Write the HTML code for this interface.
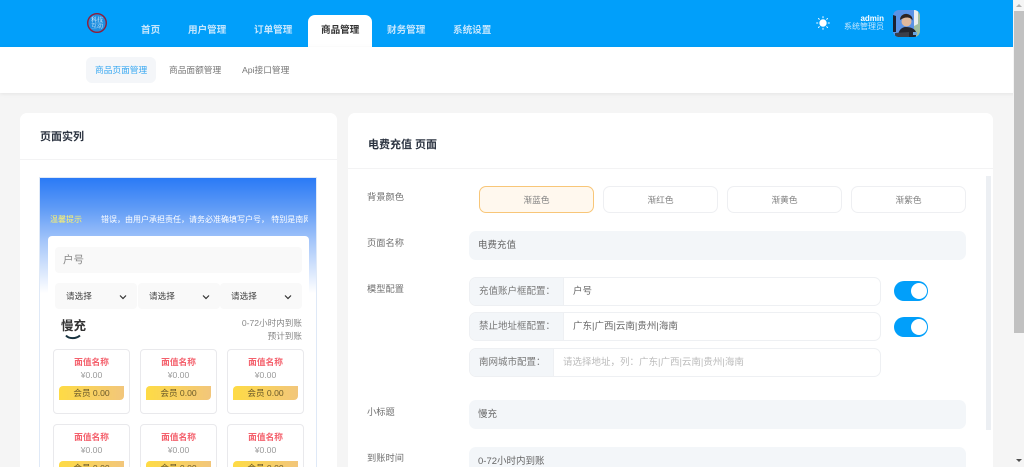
<!DOCTYPE html>
<html lang="zh"><head><meta charset="utf-8"><title>商品页面管理</title>
<style>
html,body{margin:0;padding:0;width:1024px;height:467px;overflow:hidden;background:#f5f5f5;font-family:"Liberation Sans","Noto Sans CJK SC",sans-serif}
#w{position:relative;width:1024px;height:467px;overflow:hidden;background:#f5f5f5;filter:blur(.3px)}
.a{position:absolute;box-sizing:border-box}
.t{position:absolute;white-space:nowrap;line-height:1}
.nav{color:#c5e6fd;font-size:9.6px;font-weight:700;top:25.5px}
.lab{color:#6f6f6f;font-size:9.25px;left:367px}
.btn{position:absolute;top:186px;width:115px;height:27px;border:1px solid #eeeff2;border-radius:7px;background:#fff;color:#808080;font-size:8.7px;line-height:26px;text-align:center;box-sizing:border-box}
.inp{position:absolute;left:469px;width:497px;height:29px;background:#f3f6f9;border-radius:7px;color:#666;font-size:9.5px;line-height:29px;padding-left:9px;box-sizing:border-box}
.grp{position:absolute;left:469px;width:412px;height:29px;border:1px solid #eef0f3;border-radius:7px;box-sizing:border-box;background:#fff;overflow:hidden;font-size:9.5px;line-height:28.5px;color:#666}
.grp span{display:block;position:absolute;left:0;top:0;height:27px;background:#f3f6f9;border-right:1px solid #eef0f3;box-sizing:border-box;padding-left:9px;color:#777}
.grp i{font-style:normal;position:absolute;top:0}
.tog{position:absolute;left:894px;width:34px;height:20px;background:#019ffa;border-radius:10px}
.tog:after{content:"";position:absolute;right:1.5px;top:2px;width:16px;height:16px;background:#fff;border-radius:50%}
.sel{position:absolute;top:283px;height:26px;background:#f9f9f9;border-radius:4px;color:#444;font-size:8.6px;line-height:27px;padding-left:11px;box-sizing:border-box}
.sel svg{position:absolute;right:10px;top:11px}
.card{position:absolute;width:77px;height:65px;border:1px solid #e9e9ec;border-radius:4px;background:#fff;text-align:center;box-sizing:border-box;overflow:hidden}
.card b{display:block;position:absolute;left:0;right:0;top:6px;color:#f4606c;font-size:8.7px;line-height:12px;font-weight:700}
.card em{display:block;position:absolute;left:0;right:0;top:18.500px;font-style:normal;color:#999;font-size:8.6px;line-height:12px}
.card u{display:block;position:absolute;left:5px;top:36px;width:65px;height:14px;text-decoration:none;background:linear-gradient(90deg,#fedb45,#f2c67b);border-radius:4px 0 4px 0;color:#6b5a2a;font-size:8.6px;line-height:14px}
</style></head><body><div id="w">

<!-- header -->
<div class="a" style="left:0;top:0;width:1024px;height:47px;background:#019ffa"></div>
<svg class="a" style="left:86px;top:12px" width="22" height="22" viewBox="0 0 22 22"><circle cx="11" cy="11" r="9.3" fill="#1f8fe0" stroke="#8e1e3a" stroke-width="1.4"/><text x="11" y="9.8" font-size="6" fill="#e6f4fd" text-anchor="middle" font-family="Noto Serif CJK SC,serif">科技</text><text x="11" y="16" font-size="6" fill="#e6f4fd" text-anchor="middle" font-family="Noto Serif CJK SC,serif">互动</text></svg>
<div class="t nav" style="left:141px">首页</div>
<div class="t nav" style="left:188px">用户管理</div>
<div class="t nav" style="left:254px">订单管理</div>
<div class="a" style="left:308px;top:15px;width:64px;height:32px;background:#fff;border-radius:7px 7px 0 0"></div>
<div class="t nav" style="left:321px;color:#333">商品管理</div>
<div class="t nav" style="left:387px">财务管理</div>
<div class="t nav" style="left:453px">系统设置</div>
<svg class="a" style="left:816px;top:16px" width="14" height="14" viewBox="0 0 14 14"><circle cx="7" cy="7" r="3.7" fill="#fff"/><g stroke="#fff" stroke-width="1" stroke-linecap="round"><path d="M7 .6v1.2M7 12.2v1.2M.6 7h1.2M12.2 7h1.2M2.5 2.5l.8.8M10.7 10.7l.8.8M2.5 11.5l.8-.8M10.7 3.3l.8-.8"/></g></svg>
<div class="t" style="right:140px;top:15px;font-size:8px;font-weight:700;color:#fff">admin</div>
<div class="t" style="right:140px;top:23px;font-size:8px;color:#c5e6fd">系统管理员</div>
<svg class="a" style="left:893px;top:10px" width="27" height="27" viewBox="0 0 27 27"><defs><clipPath id="c"><rect width="27" height="27" rx="6"/></clipPath></defs><g clip-path="url(#c)"><rect width="27" height="27" fill="#5a93e6"/><rect x="21" width="6" height="27" fill="#9fbf9f"/><path d="M21 0h4v14l-4 2z" fill="#e9eef0"/><path d="M0 5l3 1v16H0z" fill="#1c2230"/><path d="M5 27c0-6 3-10 8-10s9 2 10 5v5z" fill="#23252e"/><path d="M2 23l14-1v5H2z" fill="#3b3f4a"/><circle cx="13.500" cy="11.500" r="5" fill="#e0b89c"/><path d="M7 10c0-4 3.500-6.500 7-6s6 3 5.500 6.500c-1-2-3-3-5.500-3s-5 1-7 2.500z" fill="#2d2220"/><rect x="20" y="22" width="4" height="3" fill="#6aa5e0"/></g></svg>

<!-- sub nav -->
<div class="a" style="left:0;top:47px;width:1024px;height:46px;background:#fff;box-shadow:0 1px 4px rgba(0,0,0,.07)"></div>
<div class="a" style="left:86px;top:57px;width:70px;height:26px;background:#f4f6f9;border-radius:6px"></div>
<div class="t" style="left:95px;top:66px;font-size:8.7px;color:#3aa9f2">商品页面管理</div>
<div class="t" style="left:169px;top:66px;font-size:8.7px;color:#777">商品面额管理</div>
<div class="t" style="left:242px;top:66px;font-size:8.7px;color:#777">Api接口管理</div>

<!-- left card -->
<div class="a" style="left:20px;top:113px;width:317px;height:360px;background:#fff;border-radius:7px"></div>
<div class="a" style="left:20px;top:159px;width:317px;height:1px;background:#f3f3f4"></div>
<div class="t" style="left:40px;top:131.500px;font-size:11px;font-weight:700;color:#2b3340">页面实列</div>

<!-- preview -->
<div class="a" style="left:39px;top:177px;width:278px;height:295px;background:linear-gradient(180deg,#2a7af6 0,#5f9bf6 30px,#a8c8fa 65px,#fff 115px);border:1px solid #dfe9f7;border-bottom:0"></div>
<div class="t" style="left:50px;top:216px;font-size:8px;color:#fff36a">温馨提示</div>
<div class="a" style="left:101px;top:210px;width:207px;height:20px;overflow:hidden"><div class="t" style="left:0;top:6px;font-size:8px;color:#fff">错误，由用户承担责任，请务必准确填写户号， 特别是南网地区</div></div>
<div class="a" style="left:48px;top:236px;width:261px;height:240px;background:#fff;border-radius:4px 4px 0 0"></div>
<div class="a" style="left:55px;top:247px;width:247px;height:26px;background:#f9f9f9;border-radius:4px;color:#888;font-size:10.500px;line-height:26.500px;padding-left:8px">户号</div>
<div class="sel" style="left:55px;width:82px">请选择<svg width="8" height="6" viewBox="0 0 8 6"><path d="M1 1.500l3 3 3-3" fill="none" stroke="#333" stroke-width="1.200"/></svg></div>
<div class="sel" style="left:138px;width:82px">请选择<svg width="8" height="6" viewBox="0 0 8 6"><path d="M1 1.500l3 3 3-3" fill="none" stroke="#333" stroke-width="1.200"/></svg></div>
<div class="sel" style="left:220px;width:82px">请选择<svg width="8" height="6" viewBox="0 0 8 6"><path d="M1 1.500l3 3 3-3" fill="none" stroke="#333" stroke-width="1.200"/></svg></div>
<div class="t" style="left:61px;top:320px;font-size:12.500px;font-weight:700;color:#333">慢充</div>
<svg class="a" style="left:65px;top:334px" width="16" height="7" viewBox="0 0 16 7"><path d="M1 1.500c3 3.500 10 3.500 14 0" fill="none" stroke="#17323f" stroke-width="2"/></svg>
<div class="t" style="right:722px;top:319px;font-size:8.6px;color:#888">0-72小时内到账</div>
<div class="t" style="right:722px;top:332px;font-size:8.6px;color:#888">预计到账</div>

<div class="card" style="left:53px;top:349px"><b>面值名称</b><em>¥0.00</em><u>会员 0.00</u></div>
<div class="card" style="left:140px;top:349px"><b>面值名称</b><em>¥0.00</em><u>会员 0.00</u></div>
<div class="card" style="left:227px;top:349px"><b>面值名称</b><em>¥0.00</em><u>会员 0.00</u></div>
<div class="card" style="left:53px;top:424px"><b>面值名称</b><em>¥0.00</em><u>会员 0.00</u></div>
<div class="card" style="left:140px;top:424px"><b>面值名称</b><em>¥0.00</em><u>会员 0.00</u></div>
<div class="card" style="left:227px;top:424px"><b>面值名称</b><em>¥0.00</em><u>会员 0.00</u></div>

<!-- right card -->
<div class="a" style="left:348px;top:113px;width:645px;height:360px;background:#fff;border-radius:7px"></div>
<div class="a" style="left:348px;top:168px;width:645px;height:1px;background:#f3f3f4"></div>
<div class="t" style="left:368px;top:140px;font-size:11px;font-weight:700;color:#2b3340">电费充值 页面</div>

<div class="t lab" style="top:193px">背景颜色</div>
<div class="btn" style="left:479px;background:#fff8ee;border-color:#f8c678">渐蓝色</div>
<div class="btn" style="left:603px">渐红色</div>
<div class="btn" style="left:727px">渐黄色</div>
<div class="btn" style="left:851px">渐紫色</div>

<div class="t lab" style="top:239px">页面名称</div>
<div class="inp" style="top:231px">电费充值</div>

<div class="t lab" style="top:285px">模型配置</div>
<div class="grp" style="top:277px"><span style="width:94px">充值账户框配置：</span><i style="left:103px">户号</i></div>
<div class="grp" style="top:312px"><span style="width:94px">禁止地址框配置：</span><i style="left:103px">广东|广西|云南|贵州|海南</i></div>
<div class="grp" style="top:348px"><span style="width:84px">南网城市配置：</span><i style="left:93px;color:#bbb">请选择地址，列：广东|广西|云南|贵州|海南</i></div>
<div class="tog" style="top:281px"></div>
<div class="tog" style="top:317px"></div>

<div class="t lab" style="top:408px">小标题</div>
<div class="inp" style="top:400px">慢充</div>
<div class="t lab" style="top:454px">到账时间</div>
<div class="inp" style="top:447px">0-72小时内到账</div>

<!-- inner scrollbar -->
<div class="a" style="left:986px;top:176px;width:5px;height:254px;background:#eceff3"></div>

<!-- page scrollbar -->
<div class="a" style="left:1013px;top:0;width:11px;height:467px;background:#f5f5f5"></div>
<div class="a" style="left:1014px;top:11px;width:10px;height:322px;background:#c1c1c1"></div>
<svg class="a" style="left:1015px;top:3px" width="8" height="5" viewBox="0 0 8 5"><path d="M4 1l3 3H1z" fill="#b0b0b0"/></svg>
<svg class="a" style="left:1015px;top:458px" width="8" height="5" viewBox="0 0 8 5"><path d="M4 4L1 1h6z" fill="#505050"/></svg>
</div></body></html>
